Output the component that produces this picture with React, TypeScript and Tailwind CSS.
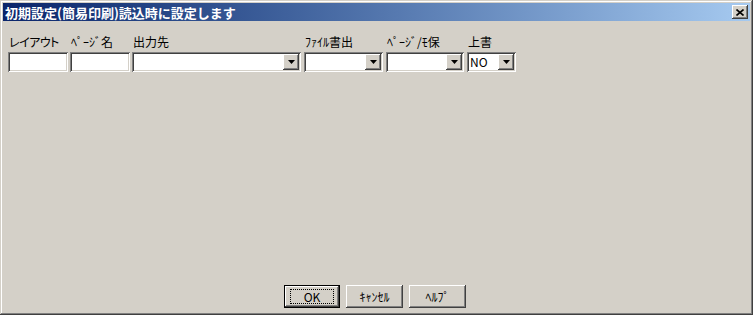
import React from 'react';

const raised =
  'shadow-[inset_-1px_-1px_#404040,inset_1px_1px_#ffffff,inset_-2px_-2px_#808080,inset_2px_2px_#d4d0c8]';
const sunken =
  'shadow-[inset_1px_1px_#808080,inset_-1px_-1px_#ffffff,inset_2px_2px_#404040,inset_-2px_-2px_#d4d0c8]';

function TextBox({ width }: { width: string }) {
  return <div className={`h-[20px] bg-white ${sunken} ${width}`} />;
}

function DropArrow() {
  return (
    <div className={`flex h-[16px] w-[16px] items-center justify-center bg-[#d4d0c8] ${raised}`}>
      <svg width="7" height="4" viewBox="0 0 7 4">
        <path d="M0 0h7L3.5 4z" fill="#000" />
      </svg>
    </div>
  );
}

function Combo({ width, value }: { width: string; value?: string }) {
  return (
    <div className={`flex h-[20px] items-center justify-between bg-white p-[2px] ${sunken} ${width}`}>
      <span className="pl-[1px] text-[12px] leading-none text-black">{value}</span>
      <DropArrow />
    </div>
  );
}

function Field({ label, children, narrow }: { label: string; children: React.ReactNode; narrow?: boolean }) {
  return (
    <div className="flex flex-col">
      <div
        className={`h-[18px] whitespace-nowrap pl-[1px] text-[12px] leading-[16px] text-black ${
          narrow ? '[font-feature-settings:"palt"] tracking-[-0.5px]' : ''
        }`}
      >
        {label}
      </div>
      {children}
    </div>
  );
}

function Button({ label, isDefault }: { label: string; isDefault?: boolean }) {
  if (isDefault) {
    return (
      <div className="h-[23px] w-[56px] border border-black">
        <div className={`flex h-full w-full items-center justify-center bg-[#d4d0c8] ${raised}`}>
          <div className="flex h-[15px] w-[44px] items-center justify-center border border-dotted border-black text-[12px] leading-none">
            {label}
          </div>
        </div>
      </div>
    );
  }
  return (
    <div className={`flex h-[23px] w-[57px] items-center justify-center bg-[#d4d0c8] text-[12px] leading-none ${raised}`}>
      {label}
    </div>
  );
}

export default function App() {
  return (
    <div
      className="flex h-[315px] w-[753px] flex-col bg-[#d4d0c8] p-[3px] shadow-[inset_-1px_-1px_#404040,inset_1px_1px_#d4d0c8,inset_-2px_-2px_#808080,inset_2px_2px_#ffffff]"
      style={{ fontFamily: '"Noto Sans CJK JP", "Noto Sans", sans-serif' }}
    >
      {/* Title bar */}
      <div className="flex h-[18px] items-center justify-between bg-gradient-to-r from-[#0a246a] to-[#a6caf0] pl-[2px] pr-[2px]">
        <span className="text-[13px] font-bold leading-none text-white">初期設定(簡易印刷)読込時に設定します</span>
        <div className={`flex h-[14px] w-[16px] items-center justify-center bg-[#d4d0c8] ${raised}`}>
          <svg width="8" height="7" viewBox="0 0 8 7">
            <path d="M0.5 0.5l7 6M7.5 0.5l-7 6" stroke="#000" strokeWidth="1.6" />
          </svg>
        </div>
      </div>

      {/* Fields */}
      <div className="flex items-start pl-[5px] pt-[13px]">
        <div className="flex gap-[2px]">
          <Field label="レイアウト" narrow>
            <TextBox width="w-[60px]" />
          </Field>
          <Field label="ﾍﾟｰｼﾞ名">
            <TextBox width="w-[60px]" />
          </Field>
          <Field label="出力先">
            <Combo width="w-[169px]" />
          </Field>
        </div>
        <div className="ml-[3px] flex gap-[3px]">
          <Field label="ﾌｧｲﾙ書出">
            <Combo width="w-[79px]" />
          </Field>
          <Field label="ﾍﾟｰｼﾞ/ﾓ保">
            <Combo width="w-[78px]" />
          </Field>
          <Field label="上書">
            <Combo width="w-[49px]" value="NO" />
          </Field>
        </div>
      </div>

      <div className="flex-1" />

      {/* Buttons */}
      <div className="flex justify-center gap-[6px] pb-[4px] pr-[3px]">
        <Button label="OK" isDefault />
        <Button label="ｷｬﾝｾﾙ" />
        <Button label="ﾍﾙﾌﾟ" />
      </div>
    </div>
  );
}
